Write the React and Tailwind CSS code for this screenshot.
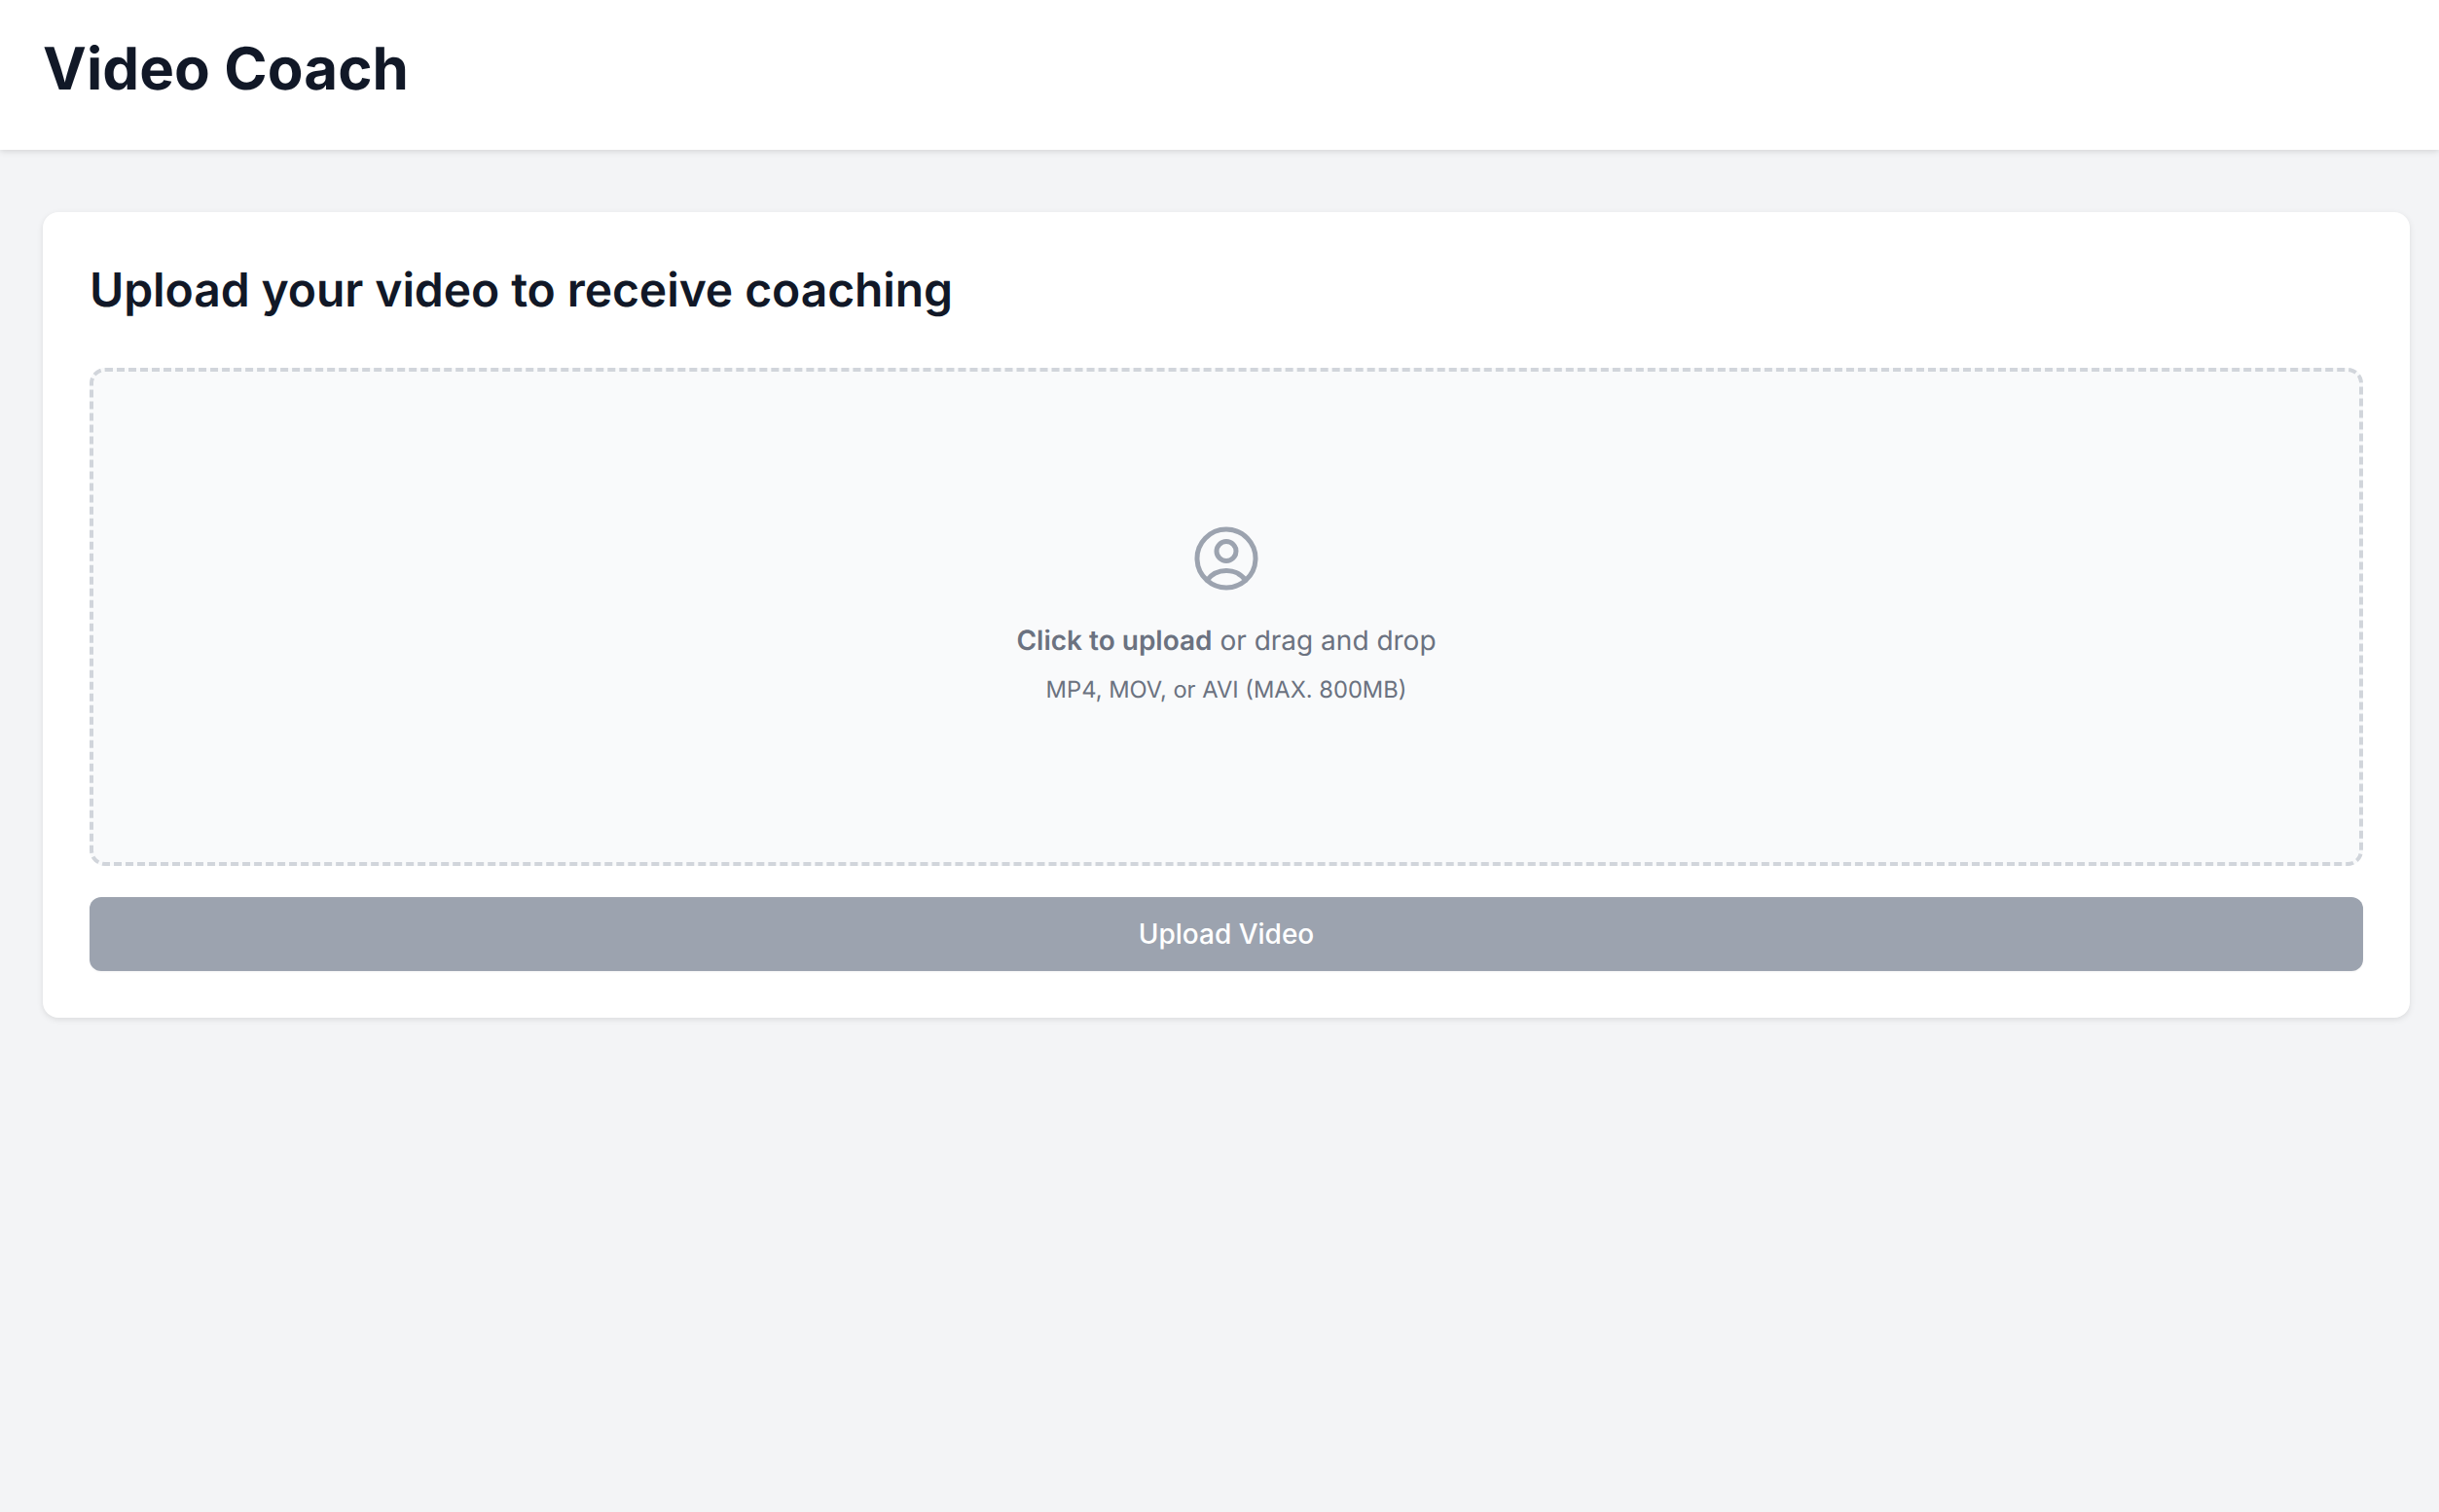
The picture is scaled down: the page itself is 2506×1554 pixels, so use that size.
import React from 'react';

const UserCircleIcon = ({ className }) => (
  <svg className={className} fill="none" viewBox="0 0 24 24" strokeWidth={1.5} stroke="currentColor">
    <path
      strokeLinecap="round"
      strokeLinejoin="round"
      d="M17.982 18.725A7.488 7.488 0 0 0 12 15.75a7.488 7.488 0 0 0-5.982 2.975m11.963 0a9 9 0 1 0-11.963 0m11.963 0A8.966 8.966 0 0 1 12 21a8.966 8.966 0 0 1-5.982-2.275M15 9.75a3 3 0 1 1-6 0 3 3 0 0 1 6 0Z"
    />
  </svg>
);

const App = () => {
  return (
    <div className="min-h-screen bg-[#f3f4f6] font-['Inter',sans-serif] [text-rendering:geometricPrecision]">
      {/* Header */}
      <header className="h-[154px] bg-white px-[44px] pt-[35px] shadow-[0_2px_6px_rgba(0,0,0,0.12)]">
        <h1 className="text-[60px] leading-[72px] font-bold tracking-[0.1px] text-[#111827]">Video Coach</h1>
      </header>

      <main className="pt-[64px] pr-[30px] pl-[44px]">
        {/* Upload card */}
        <div className="rounded-[16px] bg-white p-[48px] shadow-[0_2px_6px_rgba(0,0,0,0.1)]">
          <h2 className="mb-[48px] text-[48px] leading-[64px] font-semibold tracking-[-0.08px] text-[#111827]">
            Upload your video to receive coaching
          </h2>

          <div className="flex h-[512px] flex-col items-center justify-center rounded-[16px] border-[4px] border-dashed border-[#d1d5db] bg-[#f9fafb] pb-[10px]">
            <UserCircleIcon className="mb-[24px] h-[80px] w-[80px] text-[#9ca3af]" />
            <p className="mb-[15px] text-[28px] leading-[40px] text-[#6b7280]">
              <span className="font-semibold">Click to upload</span> or drag and drop
            </p>
            <p className="text-[23.7px] leading-[32px] text-[#6b7280]">MP4, MOV, or AVI (MAX. 800MB)</p>
          </div>

          <button className="mt-[32px] flex h-[76px] w-full items-center justify-center rounded-[12px] bg-[#9ca3af] text-[28px] font-medium text-white shadow-[0_1px_2px_rgba(0,0,0,0.05)]">
            Upload Video
          </button>
        </div>
      </main>
    </div>
  );
};

export default App;
